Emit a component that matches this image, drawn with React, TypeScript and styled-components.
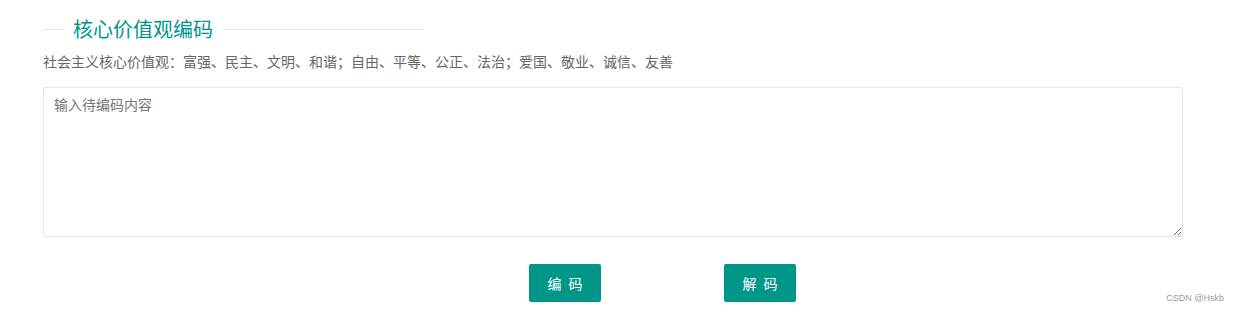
import styled, { createGlobalStyle } from 'styled-components';

const GlobalStyle = createGlobalStyle`
  html, body {
    margin: 0;
    padding: 0;
    background: #fff;
  }
  body {
    font-family: "Noto Sans CJK SC", "Liberation Sans", sans-serif;
    color: #666;
  }
`;

const Page = styled.div`
  position: relative;
  width: 1239px;
  height: 310px;
  box-sizing: border-box;
  padding: 15px 0 0 43px;
`;

const FieldTitle = styled.div`
  display: flex;
  flex-direction: row;
  align-items: center;
  width: 380px;
  height: 28px;
`;

const Rule = styled.span<{ $grow?: boolean }>`
  display: block;
  height: 1px;
  background: #e6e6e6;
  width: 20px;
  flex: ${(p) => (p.$grow ? '1' : 'none')};
`;

const Legend = styled.h2`
  margin: 0 10px;
  font-size: 20px;
  line-height: 28px;
  font-weight: 400;
  color: #009688;
`;

const Motto = styled.p`
  margin: 8px 0 0;
  font-size: 14px;
  line-height: 20px;
  color: #666;
`;

const TextBox = styled.textarea`
  display: block;
  margin-top: 16px;
  width: 1140px;
  height: 150px;
  box-sizing: border-box;
  padding: 6px 10px;
  border: 1px solid #e6e6e6;
  border-radius: 2px;
  font-family: "Noto Sans CJK SC", "Liberation Sans", sans-serif;
  font-size: 14px;
  line-height: 20px;
  color: #333;
  outline: none;

  &::placeholder {
    color: #757575;
  }
`;

const Actions = styled.div`
  display: flex;
  flex-direction: row;
  gap: 123px;
  margin-top: 27px;
  padding-left: 486px;
`;

const Button = styled.button`
  width: 72px;
  height: 38px;
  padding: 0;
  border: none;
  border-radius: 2px;
  background: #009688;
  color: #fff;
  font-family: "Noto Sans CJK SC", "Liberation Sans", sans-serif;
  font-size: 14px;
  letter-spacing: 7px;
  text-indent: 7px;
  cursor: pointer;
`;

const Watermark = styled.span`
  position: absolute;
  right: 15px;
  bottom: 7px;
  font-family: "Liberation Sans", Arial, sans-serif;
  font-size: 9px;
  color: #999;
`;

export default function App() {
  return (
    <>
      <GlobalStyle />
      <Page>
        <FieldTitle>
          <Rule />
          <Legend>核心价值观编码</Legend>
          <Rule $grow />
        </FieldTitle>
        <Motto>社会主义核心价值观：富强、民主、文明、和谐；自由、平等、公正、法治；爱国、敬业、诚信、友善</Motto>
        <TextBox placeholder="输入待编码内容" />
        <Actions>
          <Button>编码</Button>
          <Button>解码</Button>
        </Actions>
        <Watermark>CSDN @Hskb</Watermark>
      </Page>
    </>
  );
}
